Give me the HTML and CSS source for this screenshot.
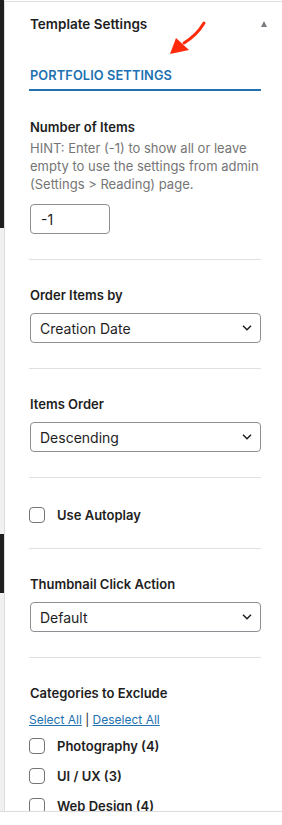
FILE: index.html
```html
<!DOCTYPE html>
<html lang="en">
<head>
<meta charset="utf-8">
<title>Template Settings</title>
<link rel="stylesheet" href="styles.css">
</head>
<body>
<div class="frame">
  <div class="edge">
    <div class="edge-dark edge-top"></div>
    <div class="edge-light edge-mid"></div>
    <div class="edge-dark edge-low"></div>
    <div class="edge-light edge-rest"></div>
  </div>
  <div class="panel">
    <div class="panel-header">
      <h2 class="panel-title">Template Settings</h2>
      <span class="toggle" aria-hidden="true"></span>
    </div>
    <div class="tabs">
      <div class="tab active">PORTFOLIO SETTINGS</div>
    </div>

    <div class="field">
      <label class="field-label">Number of Items</label>
      <p class="hint">HINT: Enter (-1) to show all or leave empty to use the settings from admin (Settings &gt; Reading) page.</p>
      <div class="text-input">-1</div>
    </div>

    <div class="field">
      <label class="field-label">Order Items by</label>
      <div class="select">
        <span>Creation Date</span>
        <svg class="chevron" width="10" height="6" viewBox="0 0 10 6"><path d="M1 0.8 L5 4.8 L9 0.8" fill="none" stroke="#1e1e1e" stroke-width="1.5"/></svg>
      </div>
    </div>

    <div class="field">
      <label class="field-label">Items Order</label>
      <div class="select">
        <span>Descending</span>
        <svg class="chevron" width="10" height="6" viewBox="0 0 10 6"><path d="M1 0.8 L5 4.8 L9 0.8" fill="none" stroke="#1e1e1e" stroke-width="1.5"/></svg>
      </div>
    </div>

    <div class="field field-check">
      <div class="check-row">
        <span class="checkbox"></span>
        <span class="check-label">Use Autoplay</span>
      </div>
    </div>

    <div class="field">
      <label class="field-label">Thumbnail Click Action</label>
      <div class="select">
        <span>Default</span>
        <svg class="chevron" width="10" height="6" viewBox="0 0 10 6"><path d="M1 0.8 L5 4.8 L9 0.8" fill="none" stroke="#1e1e1e" stroke-width="1.5"/></svg>
      </div>
    </div>

    <div class="field field-last">
      <label class="field-label">Categories to Exclude</label>
      <div class="links"><a href="#">Select All</a> | <a href="#">Deselect All</a></div>
      <div class="check-list">
        <div class="check-row"><span class="checkbox"></span><span class="check-label">Photography (4)</span></div>
        <div class="check-row"><span class="checkbox"></span><span class="check-label">UI / UX (3)</span></div>
        <div class="check-row"><span class="checkbox"></span><span class="check-label">Web Design (4)</span></div>
      </div>
    </div>
  </div>
  <svg class="annotation" width="282" height="80" viewBox="0 0 282 80" aria-hidden="true">
    <path d="M204 23 Q197 35 184 43" fill="none" stroke="#ff2a0a" stroke-width="3" stroke-linecap="round"/>
    <polygon points="170,54 176,38 189,50" fill="#ff2a0a"/>
  </svg>
</div>
</body>
</html>
```
FILE: styles.css
```css
* { box-sizing: border-box; }
html, body { margin: 0; padding: 0; background: #fff; }
body {
  font-family: Inter, "Noto Sans", "Liberation Sans", sans-serif;
  font-size: 13px;
  color: #1e1e1e;
}
.frame {
  position: relative;
  display: flex;
  height: 812px;
  overflow: hidden;
  border-bottom: 1px solid #dcdcde;
}
.edge {
  width: 4px;
  display: flex;
  flex-direction: column;
  flex: none;
}
.edge-dark { background: #1e1e1e; }
.edge-light { background: #f0f0f1; }
.edge-top { height: 228px; }
.edge-mid { height: 306px; }
.edge-low { height: 59px; }
.edge-rest { flex: 1; }

.panel {
  flex: 1;
  margin-top: 1px;
  border-top: 1px solid #e0e0e0;
  border-left: 1px solid #dcdcde;
  padding: 0 21px 0 24px;
  min-width: 0;
}
.panel-header {
  display: flex;
  align-items: center;
  justify-content: space-between;
  padding-top: 12px;
}
.panel-title {
  margin: 0;
  font-size: 13.5px;
  line-height: 20px;
  font-weight: 600;
  padding-left: 1px;
}
.toggle {
  width: 0; height: 0;
  margin-right: -6px;
  border-left: 3.5px solid transparent;
  border-right: 3.5px solid transparent;
  border-bottom: 6px solid #787c82;
}
.tabs {
  margin-top: 33px;
  border-bottom: 2px solid #2271b1;
  padding: 0 0 4px 1px;
}
.tab {
  color: #2271b1;
  font-size: 12.8px;
  line-height: 18px;
  font-weight: 600;
  letter-spacing: 0.1px;
}
.field {
  padding: 27px 0 25px;
  border-bottom: 1px solid #e0e0e0;
}
.field + .field { padding-top: 26px; }
.field-label {
  display: block;
  font-weight: 600;
  line-height: 18px;
  padding-left: 1px;
}
.hint {
  margin: 3px 0 0 1px;
  color: #757575;
  line-height: 18px;
}
.text-input {
  margin: 11px 0 0 1px;
  width: 80px;
  height: 30px;
  border: 1px solid #8c8f94;
  border-radius: 4px;
  padding: 0 10px;
  display: flex;
  align-items: center;
  font-size: 14px;
}
.select {
  margin: 9px 0 0 1px;
  height: 30px;
  border: 1px solid #8c8f94;
  border-radius: 4px;
  padding: 0 8px 0 9px;
  display: flex;
  align-items: center;
  justify-content: space-between;
  font-size: 14px;
}
.chevron { flex: none; }
.field.field-check { padding-top: 28px; padding-bottom: 24px; }
.check-row {
  display: flex;
  align-items: center;
  gap: 12px;
  height: 18px;
}
.checkbox {
  width: 16px;
  height: 16px;
  border: 1px solid #757575;
  border-radius: 4px;
  background: #fff;
  flex: none;
}
.check-label {
  font-weight: 600;
  line-height: 18px;
}
.links {
  margin-top: 9px;
  line-height: 18px;
  font-size: 12px;
  color: #1e1e1e;
}
.links a { color: #2271b1; }
.check-list {
  margin-top: 8px;
  display: flex;
  flex-direction: column;
  gap: 12px;
}
.field-last { border-bottom: none; }
.annotation {
  position: absolute;
  left: 0;
  top: 0;
  pointer-events: none;
}
```
